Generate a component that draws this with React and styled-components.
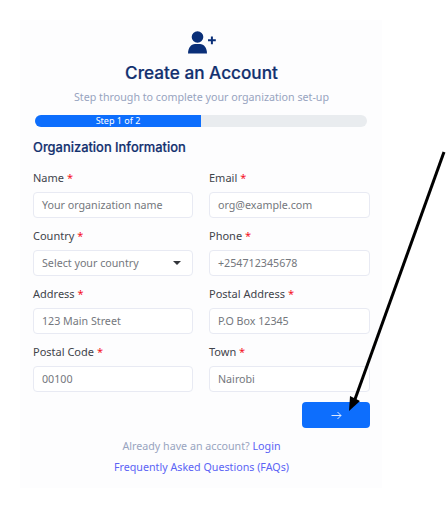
import React from 'react'
import styled, { createGlobalStyle } from 'styled-components'

const GlobalStyle = createGlobalStyle`
  * { box-sizing: border-box; }
  html, body { margin: 0; background: #fff; }
  body { font-family: "Noto Sans", "Open Sans", sans-serif; }
`

const Page = styled.div`
  position: relative;
  width: 446px;
  height: 508px;
  padding: 20px 0 0 20px;
  overflow: hidden;
`

const Card = styled.div`
  width: 362px;
  height: 468px;
  padding: 10px 12px 0 13px;
  background: #fdfdfe;
  display: flex;
  flex-direction: column;
`

const Header = styled.div`
  display: flex;
  flex-direction: column;
  align-items: center;
`

const Title = styled.h1`
  margin: 7px 0 0;
  font-family: Inter, sans-serif;
  font-size: 17.2px;
  line-height: 24px;
  font-weight: 500;
  color: #12306f;
  -webkit-text-stroke: 0.2px #12306f;
`

const Subtitle = styled.p`
  margin: 4px 0 0;
  font-size: 10.7px;
  line-height: 16px;
  color: #98a4c0;
`

const Progress = styled.div`
  margin: 10px 3px 0 2px;
  height: 12px;
  border-radius: 6px;
  background: #e9ecef;
  overflow: hidden;
`

const ProgressFill = styled.div`
  width: 50%;
  height: 100%;
  background: #0d6efd;
  color: #fff;
  font-size: 9px;
  line-height: 12px;
  text-align: center;
`

const SectionTitle = styled.h2`
  margin: 12px 0 0;
  font-family: Inter, sans-serif;
  font-size: 12.9px;
  line-height: 18px;
  font-weight: 500;
  color: #12306f;
  -webkit-text-stroke: 0.2px #12306f;
`

const FormGrid = styled.div`
  margin-top: 10px;
  display: grid;
  grid-template-columns: 160px 161px;
  column-gap: 16px;
  row-gap: 7px;
`

const Field = styled.div`
  display: flex;
  flex-direction: column;
  gap: 4px;
`

const Label = styled.label`
  font-size: 11px;
  line-height: 21px;
  color: #3f444b;
`

const Star = styled.span`
  color: #f5101f;
`

const InputBox = styled.div`
  height: 26px;
  padding: 0 8px;
  border: 1px solid #e8eaf3;
  border-radius: 4px;
  background: #fff;
  display: flex;
  align-items: center;
  justify-content: space-between;
  font-size: 10.7px;
  color: #74777d;
`

const Caret = styled.span`
  width: 0;
  height: 0;
  margin-right: 3px;
  border-left: 4px solid transparent;
  border-right: 4px solid transparent;
  border-top: 4px solid #33363b;
`

const Actions = styled.div`
  margin-top: 10px;
  display: flex;
  justify-content: flex-end;
`

const NextButton = styled.button`
  width: 68px;
  height: 26px;
  border: none;
  border-radius: 4px;
  background: #0d6efd;
  padding: 0;
  display: flex;
  align-items: center;
  justify-content: center;
`

const Footer = styled.div`
  margin-top: 10px;
  display: flex;
  flex-direction: column;
  align-items: center;
  gap: 5px;
  font-size: 10.7px;
  line-height: 16px;
  color: #98a4c0;
`

const FooterLink = styled.a`
  color: #5b63f5;
  text-decoration: none;
`

const PointerArrow = styled.svg`
  position: absolute;
  left: 0;
  top: 0;
  pointer-events: none;
`

const fields = [
  { label: 'Name', value: 'Your organization name' },
  { label: 'Email', value: 'org@example.com' },
  { label: 'Country', value: 'Select your country', select: true },
  { label: 'Phone', value: '+254712345678' },
  { label: 'Address', value: '123 Main Street' },
  { label: 'Postal Address', value: 'P.O Box 12345' },
  { label: 'Postal Code', value: '00100' },
  { label: 'Town', value: 'Nairobi' },
]

const UserPlusIcon = () => (
  <svg width="30" height="24" viewBox="0 0 30 24" fill="#0a2f78">
    <circle cx="10.5" cy="7" r="5.8" />
    <path d="M1 23.5c0-5.6 3-9.5 7-9.5h5c4 0 7 3.9 7 9.5z" />
    <path d="M21 9.3h2.9V6.4h2v2.9h2.9v2h-2.9v2.9h-2v-2.9H21z" />
  </svg>
)

const ArrowRightIcon = () => (
  <svg width="11" height="9" viewBox="0 0 11 9" fill="none" stroke="#dbe8ff" strokeWidth="1">
    <path d="M0.5 4.5h9.5M6.5 1l3.5 3.5L6.5 8" />
  </svg>
)

export default function App() {
  return (
    <Page>
      <GlobalStyle />
      <Card>
        <Header>
          <UserPlusIcon />
          <Title>Create an Account</Title>
          <Subtitle>Step through to complete your organization set-up</Subtitle>
        </Header>
        <Progress>
          <ProgressFill>Step 1 of 2</ProgressFill>
        </Progress>
        <SectionTitle>Organization Information</SectionTitle>
        <FormGrid>
          {fields.map((f) => (
            <Field key={f.label}>
              <Label>
                {f.label} <Star>*</Star>
              </Label>
              <InputBox>
                {f.value}
                {f.select && <Caret />}
              </InputBox>
            </Field>
          ))}
        </FormGrid>
        <Actions>
          <NextButton>
            <ArrowRightIcon />
          </NextButton>
        </Actions>
        <Footer>
          <span>
            Already have an account? <FooterLink>Login</FooterLink>
          </span>
          <FooterLink>Frequently Asked Questions (FAQs)</FooterLink>
        </Footer>
      </Card>
      <PointerArrow width="446" height="508" viewBox="0 0 446 508">
        <path d="M444 152L354 402" stroke="#000" strokeWidth="3" fill="none" />
        <path d="M349 411l1-15 10 5z" fill="#000" />
      </PointerArrow>
    </Page>
  )
}
